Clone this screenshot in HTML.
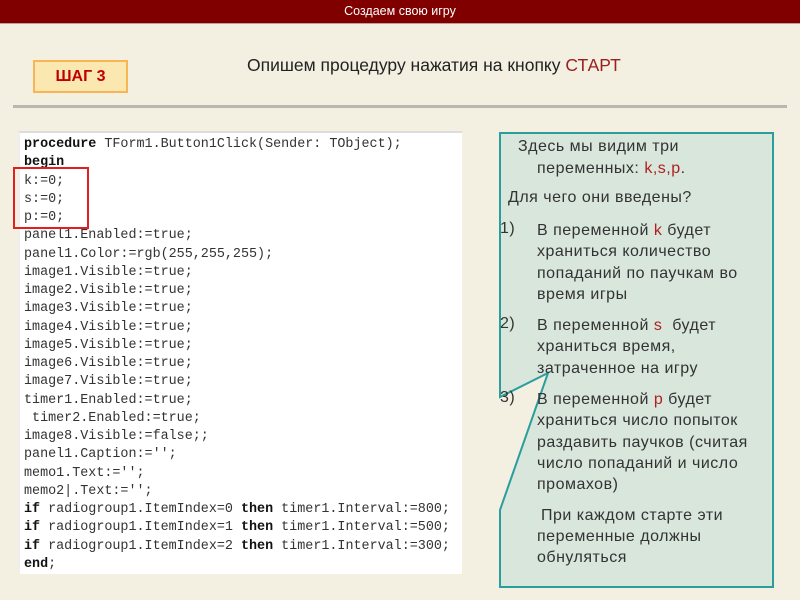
<!DOCTYPE html>
<html><head><meta charset="utf-8"><style>
body{margin:0;width:800px;height:600px;background:#f3efe1;position:relative;overflow:hidden;font-family:"Liberation Sans","DejaVu Sans",sans-serif}
.hdr{position:absolute;left:0;top:0;width:800px;height:23px;background:#800000;color:#fff;font-size:12.5px;text-align:center;line-height:23px;border-bottom:1px solid #c0a090}
.step{position:absolute;left:33px;top:60px;width:91px;height:29px;background:#fbe7b0;border:2px solid #f7b653;color:#c00000;font-weight:bold;font-size:16px;text-align:center;line-height:29px}
.title{position:absolute;left:247px;top:55px;font-size:17.5px;color:#222}
.sep{position:absolute;left:13px;top:105px;width:774px;height:3px;background:#b8b7b0}
.code{position:absolute;left:18px;top:131px;width:442px;height:441px;background:#fff;border-top:2px solid #ddd;border-left:2px solid #eee}
.pre{position:absolute;left:4px;top:3px;font-family:"Liberation Mono",monospace;font-size:13.4px;color:#333}
.pre div{height:18.26px;line-height:18.26px;white-space:pre}
.pre b{color:#111}
.red{position:absolute;left:13px;top:167px;width:72px;height:58px;border:2px solid #e02020}
.t{position:absolute;font-size:16px;letter-spacing:0.5px;color:#333;white-space:nowrap}
.r{color:#b02020}
</style></head><body>
<div class="hdr">Создаем свою игру</div>
<div class="step">ШАГ 3</div>
<div class="title">Опишем процедуру нажатия на кнопку <span style="color:#9a2020">СТАРТ</span></div>
<div class="sep"></div>
<div class="code"><div class="pre"><div><b>procedure</b> TForm1.Button1Click(Sender: TObject);</div><div><b>begin</b></div><div>k:=0;</div><div>s:=0;</div><div>p:=0;</div><div>panel1.Enabled:=true;</div><div>panel1.Color:=rgb(255,255,255);</div><div>image1.Visible:=true;</div><div>image2.Visible:=true;</div><div>image3.Visible:=true;</div><div>image4.Visible:=true;</div><div>image5.Visible:=true;</div><div>image6.Visible:=true;</div><div>image7.Visible:=true;</div><div>timer1.Enabled:=true;</div><div> timer2.Enabled:=true;</div><div>image8.Visible:=false;;</div><div>panel1.Caption:='';</div><div>memo1.Text:='';</div><div>memo2|.Text:='';</div><div><b>if</b> radiogroup1.ItemIndex=0 <b>then</b> timer1.Interval:=800;</div><div><b>if</b> radiogroup1.ItemIndex=1 <b>then</b> timer1.Interval:=500;</div><div><b>if</b> radiogroup1.ItemIndex=2 <b>then</b> timer1.Interval:=300;</div><div><b>end</b>;</div></div></div>
<div class="red"></div>
<svg style="position:absolute;left:0;top:0" width="800" height="600">
<path d="M500,133 L773,133 L773,587 L500,587 L500,510 L548,373 L500,397 Z" fill="#d8e6dc" stroke="#2a9d9d" stroke-width="2"/>
</svg>
<div class="t" style="left:518px;top:138px">Здесь мы видим три</div>
<div class="t" style="left:537px;top:160px">переменных: <span class="r">k,s,p</span>.</div>
<div class="t" style="left:508px;top:189px">Для чего они введены?</div>
<div class="t" style="left:500px;top:220px">1)</div>
<div class="t" style="left:537px;top:220px;line-height:21.3px">В переменной <span class="r">k</span> будет<br>храниться количество<br>попаданий по паучкам во<br>время игры</div>
<div class="t" style="left:500px;top:315px">2)</div>
<div class="t" style="left:537px;top:315px;line-height:21.3px">В переменной <span class="r">s</span>&nbsp; будет<br>храниться время,<br>затраченное на игру</div>
<div class="t" style="left:500px;top:389px">3)</div>
<div class="t" style="left:537px;top:389px;line-height:21.3px">В переменной <span class="r">p</span> будет<br>храниться число попыток<br>раздавить паучков (считая<br>число попаданий и число<br>промахов)</div>
<div class="t" style="left:541px;top:505px;line-height:21.3px">При каждом старте эти</div>
<div class="t" style="left:537px;top:526px;line-height:21.3px">переменные должны<br>обнуляться</div>
</body></html>
